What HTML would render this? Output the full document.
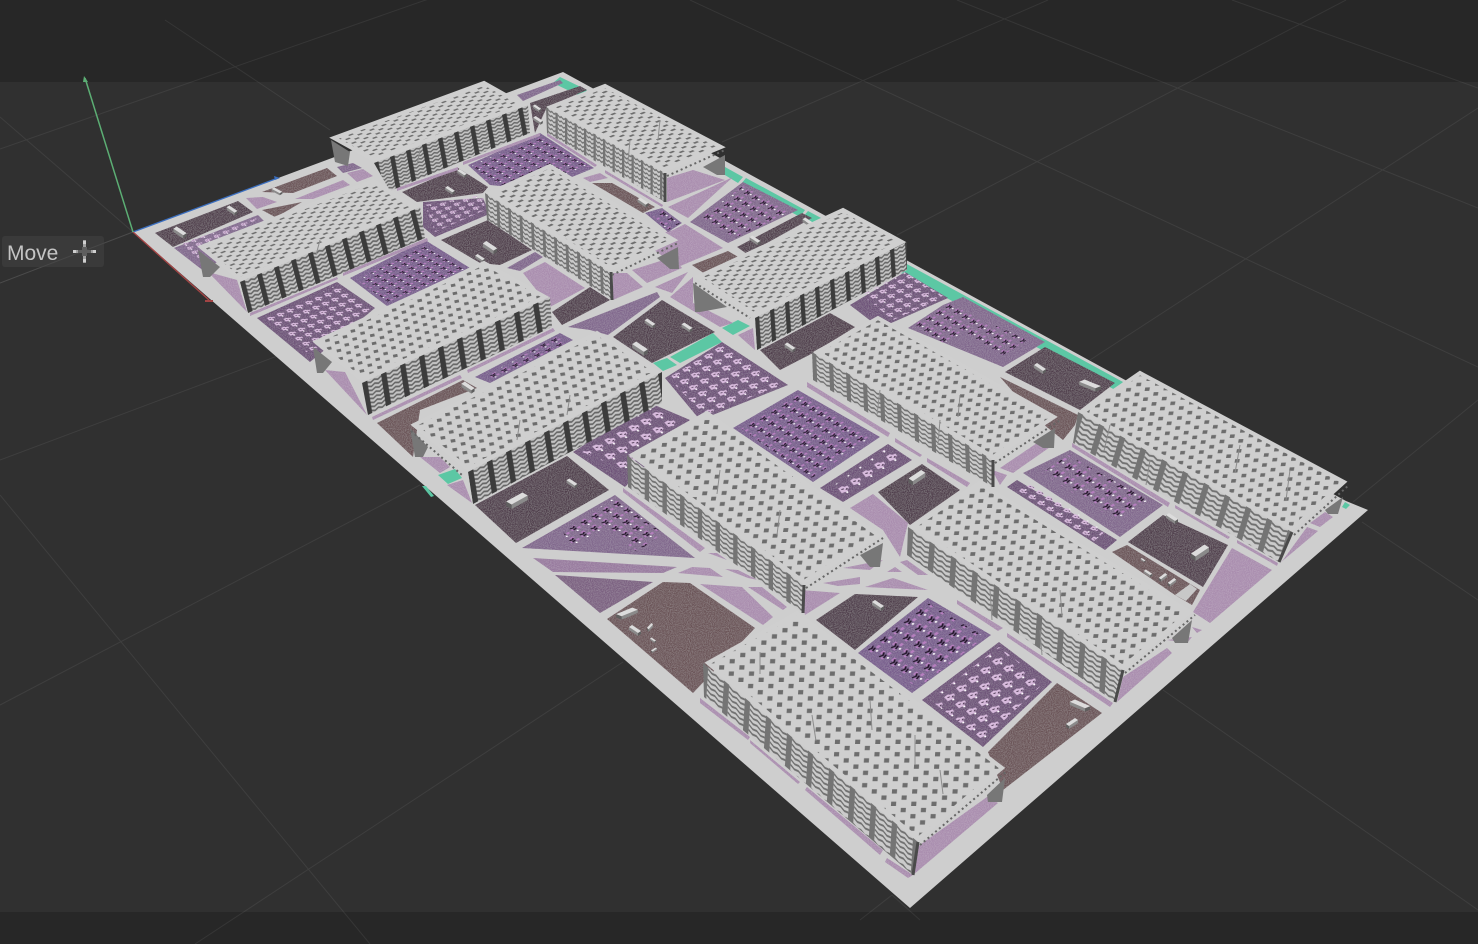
<!DOCTYPE html>
<html lang="en"><head><meta charset="utf-8"><title>Move</title>
<style>
html,body{margin:0;padding:0;background:#303030;width:1478px;height:944px;overflow:hidden}
svg{display:block;position:absolute;left:0;top:0}
.d{fill:#4f3c4b}.b{fill:#6a5256}.m{fill:#80668c}.l{fill:#a98cae}.p{fill:#775c8c}.q{fill:#6c5077}.t{fill:#5cc7a4}
.st{fill:#a98cae}
.r{stroke:#cfcfcf;stroke-width:4;stroke-linejoin:miter}
.s{fill:#777}
.f{fill:none;stroke:#666;stroke-width:2;stroke-dasharray:2 3}
.e{fill:none;stroke:#4a4a4a;stroke-width:3}
.g{stroke:#fff;stroke-opacity:.07;stroke-width:1;fill:none}
.c{stroke:#8c8c8c;stroke-width:1;fill:none}
</style></head><body>
<svg width="1478" height="944" viewBox="0 0 1478 944" xmlns="http://www.w3.org/2000/svg">
<defs>
<filter id="n" filterUnits="userSpaceOnUse" x="0" y="0" width="1478" height="944">
<feTurbulence type="fractalNoise" baseFrequency=".95" numOctaves="2" seed="4" result="t"/>
<feColorMatrix in="t" type="matrix" values="0 0 0 0 1  0 0 0 0 1  0 0 0 0 1  .3 0 0 0 -.1" result="w"/>
<feComposite in="w" in2="SourceAlpha" operator="in" result="c"/>
<feMerge><feMergeNode in="SourceGraphic"/><feMergeNode in="c"/></feMerge>
</filter>
<pattern id="rb" width="2" height="2" patternUnits="userSpaceOnUse"><rect width="2" height="2" fill="#cfcfcf"/><rect width=".72" height=".5" fill="#6d6d6d"/><rect x="1" y="1" width=".72" height=".5" fill="#6d6d6d"/></pattern>
<pattern id="rn" width="2" height="2" patternUnits="userSpaceOnUse"><rect width="2" height="2" fill="#cfcfcf"/><rect width=".5" height=".7" fill="#6d6d6d"/><rect x="1" y="1" width=".5" height=".7" fill="#6d6d6d"/></pattern>
<pattern id="r1" href="#rb" patternTransform="matrix(6 -2.3 3 1.9 0 0)"/>
<pattern id="r3" href="#rb" patternTransform="matrix(6.2 -2.5 3.1 2 0 0)"/>
<pattern id="r7" href="#rb" patternTransform="matrix(6.2 -2.4 3.4 2.2 0 0)"/>
<pattern id="r2" href="#rb" patternTransform="matrix(6 -2.4 3.8 2.1 0 0)"/>
<pattern id="r4" href="#rb" patternTransform="matrix(6.2 -2.7 4 2.4 0 0)"/>
<pattern id="r5" href="#rn" patternTransform="matrix(8.8 -1.8 .9 4 0 0)"/>
<pattern id="r6" href="#rn" patternTransform="matrix(9.2 -1.4 .9 4.4 0 0)"/>
<pattern id="r8" href="#rn" patternTransform="matrix(9 -.3 .9 -4.6 0 0)"/>
<pattern id="r9" href="#rn" patternTransform="matrix(9.4 -.3 .9 -5 0 0)"/>
<pattern id="r10" href="#rn" patternTransform="matrix(9.7 -.2 .8 -5.3 0 0)"/>
<pattern id="r11" href="#rn" patternTransform="matrix(9.7 -.2 .9 -5.5 0 0)"/>
<pattern id="r13" href="#rn" patternTransform="matrix(10.1 0 .45 -6.2 0 0)"/>

<pattern id="w1" width="20" height="20" patternUnits="userSpaceOnUse"><rect width="20" height="20" fill="#c4c4c4"/><path fill="none" stroke="#666" stroke-width="1.1" d="M5 1l3.75 1 3.75-1 3.75 1 3.75-1M5 3.5l3.75 1 3.75-1 3.75 1 3.75-1M5 6l3.75 1 3.75-1 3.75 1 3.75-1M5 8.5l3.75 1 3.75-1 3.75 1 3.75-1M5 11l3.75 1 3.75-1 3.75 1 3.75-1M5 13.5l3.75 1 3.75-1 3.75 1 3.75-1M5 16l3.75 1 3.75-1 3.75 1 3.75-1M5 18.5l3.75 1 3.75-1 3.75 1 3.75-1"/><rect width="5.5" height="20" fill="#3c3c3c"/></pattern>
<pattern id="a1" href="#w1" patternTransform="matrix(.8 -.3 .25 1.35 374 163)"/>
<pattern id="a3" href="#w1" patternTransform="matrix(.85 -.355 .4 1.55 240 282)"/>
<pattern id="a5" href="#w1" patternTransform="matrix(.95 -.435 .25 1.6 362 383)"/>
<pattern id="a6" href="#w1" patternTransform="matrix(.95 -.49 .25 1.6 468 472)"/>
<pattern id="a7" href="#w1" patternTransform="matrix(.75 -.375 .1 1.55 755 318)"/>

<pattern id="w2" width="20" height="20" patternUnits="userSpaceOnUse"><rect width="20" height="20" fill="#cbcbcb"/><path fill="none" stroke="#707070" stroke-width="1.2" d="M5 1l3.750 1 3.750-1 3.750 1 3.750-1M5 4.200l3.750 1 3.750-1 3.750 1 3.750-1M5 7.400l3.750 1 3.750-1 3.750 1 3.750-1M5 10.600l3.750 1 3.750-1 3.750 1 3.750-1M5 13.800l3.750 1 3.750-1 3.750 1 3.750-1M5 17l3.750 1 3.750-1 3.750 1 3.750-1"/><rect width="5" height="20" fill="#747474"/></pattern>
<pattern id="a2" href="#w2" patternTransform="matrix(.475 .265 0 1.35 546 107)"/>
<pattern id="a4" href="#w2" patternTransform="matrix(.575 .365 .05 1.4 485 193)"/>
<pattern id="a8" href="#w2" patternTransform="matrix(.85 .51 .05 1.4 812 352)"/>
<pattern id="a9" href="#w2" patternTransform="matrix(1.05 .59 -.45 1.5 1078 412)"/>
<pattern id="a10" href="#w2" patternTransform="matrix(1.075 .715 -.1 1.55 908 527)"/>
<pattern id="a11" href="#w2" patternTransform="matrix(.885 .65 0 1.5 627 455)"/>
<pattern id="a13" href="#w2" patternTransform="matrix(1.05 .875 -.1 1.6 703 663)"/>

<pattern id="td" width="10" height="10" patternUnits="userSpaceOnUse"><path fill="#b67fbf" d="M4 1h3v2H4zM6 5h2.500v2H6zM1 4.500h1.500v2H1z"/><path d="M1.500 3l2.500 1 2-1.500M2.500 6l3-.8" stroke="#24152a" stroke-width="1.100" fill="none"/><rect x="3.500" y="7.400" width="1.400" height="1.400" fill="#fff"/></pattern>
<pattern id="tp" width="10" height="10" patternUnits="userSpaceOnUse"><path fill="#d8bbdd" d="M2 1.500h3l1 1.500 2 .5-.5 2-2 .5-.5 1.500-2-1-2-.5.5-2z"/><path d="M3 3.500l1.500.5M5 5.500l1.500-.5" stroke="#3a2740" stroke-width=".7" fill="none"/><rect x="3.500" y="7" width="1.200" height="1.200" fill="#fff"/></pattern>
<pattern id="t1" href="#td" patternTransform="matrix(.9 -.4 .7 .4 0 0)"/>
<pattern id="t2" href="#td" patternTransform="matrix(1 -.6 .8 .5 0 0)"/>
<pattern id="t3" href="#td" patternTransform="matrix(1.1 -.65 .8 .5 0 0)"/>
<pattern id="t4" href="#td" patternTransform="matrix(1.2 -.7 1 .65 0 0)"/>
<pattern id="t5" href="#td" patternTransform="matrix(1.1 -.5 .5 .5 0 0)"/>
<pattern id="t6" href="#td" patternTransform="matrix(1.1 -.6 1 .6 0 0)"/>
<pattern id="t7" href="#td" patternTransform="matrix(1.2 -.9 1.1 .7 0 0)"/>
<pattern id="p1" href="#tp" patternTransform="matrix(.95 -.4 .7 .5 0 0)"/>
<pattern id="p2" href="#tp" patternTransform="matrix(.9 -.4 .5 .4 0 0)"/>
<pattern id="p3" href="#tp" patternTransform="matrix(.9 -.5 .8 .45 0 0)"/>
<pattern id="p4" href="#tp" patternTransform="matrix(1.1 -.65 .9 .6 0 0)"/>
<pattern id="p5" href="#tp" patternTransform="matrix(1.2 -.65 1.2 .85 0 0)"/>
<pattern id="p6" href="#tp" patternTransform="matrix(1.2 -.8 1.1 .85 0 0)"/>
<pattern id="p7" href="#tp" patternTransform="matrix(.9 .6 .8 -.45 0 0)"/>
<pattern id="p8" href="#tp" patternTransform="matrix(1.2 -.9 1.1 .7 0 0)"/>
<g id="bx"><path fill="#8a8a8a" d="M-6-3 3 3v3L-6 0z"/><path fill="#5f5f5f" d="M3 3 6 1v3L3 6z"/><path fill="#dcdcdc" d="M-6-3-3-5 6 1 3 3z"/></g>
</defs>

<rect width="1478" height="944" fill="#303030"/>
<rect width="1478" height="82" fill="#272727"/>
<rect y="912" width="1478" height="32" fill="#272727"/>

<g class="g">
<path d="M0 283 133 232M0 149 480-19M0 117 133 232M165 20 330 130M690 0 1478 367M957 0 1478 208M1232 0 1478 88M722 142 1048 0M897 235 1346 0M1090 360 1478 108M1353 502 1478 400M1362 522 1478 600M1163 690 1478 910M0 705 420 485M0 495 370 944M195 944 623 662M0 460 320 340M860 920 892 895 920 920"/>
</g>

<polygon fill="#cecece" points="133,232 563,72 1346,501 1368,510 910,908"/>
<path d="M133 232 278 178" stroke="#3b6fc0" stroke-width="1.4" fill="none"/>
<path d="M133 232 209 300" stroke="#a24444" stroke-width="1.4" fill="none"/>
<path d="M274 176 280 178 275 180z" fill="#3b6fc0"/>
<path d="M205 300h8v2h-8z" fill="#a24444"/>
<path d="M133 232 85 78" stroke="#5cae74" stroke-width="1.500" fill="none"/>
<path d="M83 82 84 76 88 82z" fill="#5cae74"/>

<polygon class="t" points="560,77 587,90 582,97 553,83"/>
<polygon class="t" points="725,167 743,177 738,183 720,172"/>
<polygon class="t" points="746,178 805,210 800,217 741,184"/>
<polygon class="t" points="808,211 823,219 817,226 802,218"/>
<polygon class="t" points="905,263 1123,382 1117,391 899,272"/>
<polygon class="t" points="1342,507 1345,502 1350,505 1346,509"/>
<polygon class="t" points="722,328 738,320 750,326 733,335"/>
<polygon class="t" points="670,357 713,333 722,342 680,363"/>
<polygon class="t" points="653,363 667,358 677,365 663,371"/>
<polygon class="t" points="438,475 455,469 462,478 448,484"/>
<polygon class="t" points="422,486 426,486 434,496 431,497"/>

<g filter="url(#n)">
<polygon class="d" points="155,233 238,201 253,212 173,247"/>
<polygon class="m" points="174,248 258,215 265,222 205,272"/>
<polygon class="b" points="262,192 327,168 337,176 293,193"/>
<polygon class="l" points="295,199 343,180 350,185 313,199"/>
<polygon class="l" points="246,198 263,197 277,202 257,209"/>
<polygon class="b" points="262,210 302,202 285,212 275,217"/>
<polygon class="m" points="337,167 353,163 362,168 343,173"/>
<polygon class="l" points="347,173 363,169 373,176 357,182"/>
<polygon class="d" points="402,192 458,168 488,187 483,193 417,202"/>
<polygon class="q" points="423,202 483,198 488,210 487,215 435,237 423,227"/>
<polygon class="d" points="441,240 488,220 532,250 500,265 480,263"/>
<polygon class="m" points="507,268 535,252 543,257 520,271"/>
<polygon class="p" points="350,278 425,240 470,268 387,306"/>
<polygon class="q" points="257,318 337,282 375,308 310,362"/>
<polygon class="l" points="208,272 237,280 247,312"/>
<polygon class="p" points="468,165 540,133 594,168 540,190 490,185"/>
<polygon class="m" points="517,95 560,80 563,83 523,101"/>
<polygon class="d" points="530,103 580,86 587,90 547,107 535,133"/>
<polygon class="b" points="592,183 612,183 655,207 643,213"/>
<polygon class="l" points="583,178 600,173 608,178 590,182"/>
<polygon class="l" points="667,178 693,170 725,180 667,202"/>
<polygon class="l" points="668,207 733,177 688,218"/>
<polygon class="m" points="690,222 743,182 798,210 728,243"/>
<polygon class="l" points="640,240 673,230 685,224 723,248 678,267"/>
<polygon class="p" points="645,213 662,208 682,223 668,232"/>
<polygon class="d" points="737,247 802,213 812,218 747,254"/>
<polygon class="b" points="692,265 728,251 740,258 705,274"/>
<polygon class="l" points="613,273 627,273 643,287 613,300"/>
<polygon class="l" points="632,270 673,257 682,268 647,283"/>
<polygon class="l" points="655,287 688,272 672,293"/>
<polygon class="l" points="670,297 693,277 693,303 733,323 720,327"/>
<polygon class="m" points="568,327 657,292 660,297 608,335 590,330"/>
<polygon class="d" points="552,312 590,287 610,300 562,325"/>
<polygon class="d" points="613,337 662,300 715,332 652,363"/>
<polygon class="l" points="523,273 545,262 585,288 550,307"/>
<polygon class="l" points="738,335 753,328 755,350"/>
<polygon class="q" points="665,378 722,342 788,385 700,420"/>
<polygon class="d" points="760,350 830,313 855,327 813,353 780,370"/>
<polygon class="q" points="850,305 905,272 948,298 880,328"/>
<polygon class="m" points="908,328 943,305 963,297 1045,342 1003,367"/>
<polygon class="d" points="1005,372 1045,347 1115,383 1080,410"/>
<polygon class="b" points="1000,377 1078,415 1075,425 1063,440 1038,420"/>
<polygon class="p" points="733,428 798,390 880,437 813,482"/>
<polygon class="q" points="820,488 888,444 912,460 843,502"/>
<polygon class="d" points="878,492 922,464 960,490 910,525"/>
<polygon class="l" points="850,508 873,494 908,523 900,557 883,530"/>
<polygon class="l" points="1000,468 1037,443 1053,445 1013,473"/>
<polygon class="l" points="992,470 1007,475 1000,485"/>
<polygon class="m" points="1023,473 1070,450 1163,505 1120,537"/>
<polygon class="q" points="1007,487 1017,480 1117,540 1105,550"/>
<polygon class="d" points="1128,542 1163,515 1228,545 1203,587"/>
<polygon class="b" points="1112,552 1127,545 1200,590 1192,605 1175,595"/>
<polygon class="l" points="1232,548 1272,570 1210,623 1193,612"/>
<polygon class="l" points="1310,523 1325,512 1333,517 1320,527"/>
<polygon class="l" points="1283,560 1307,527 1318,531 1280,563"/>
<polygon class="l" points="1192,627 1202,630 1197,633"/>
<polygon class="d" points="475,505 567,456 609,490 516,543"/>
<polygon class="q" points="573,452 650,403 690,420 625,487"/>
<polygon class="m" points="522,548 615,495 695,558"/>
<polygon class="l" points="533,558 677,567 663,573 553,572" style="fill:#97799e"/>
<polygon class="q" points="555,575 653,582 600,613" style="fill:#7a5f80"/>
<polygon class="b" points="607,619 663,582 690,583 755,628 693,693"/>
<polygon class="l" points="678,573 692,567 710,568 723,577"/>
<polygon class="l" points="700,584 742,587 773,617 763,625"/>
<polygon class="l" points="725,569 738,570 758,580 748,578"/>
<polygon class="l" points="748,587 762,587 787,607 783,610"/>
<polygon class="l" points="805,615 800,590 840,593"/>
<polygon class="l" points="708,553 717,553 727,560"/>
<polygon class="l" points="823,583 860,577 860,584 838,586"/>
<polygon class="d" points="816,620 855,594 918,597 855,650"/>
<polygon class="l" points="865,587 893,578 928,590"/>
<polygon class="l" points="843,568 883,560 870,570"/>
<polygon class="l" points="887,572 895,567 902,572"/>
<polygon class="l" points="900,562 907,560 928,575 918,575"/>
<polygon class="p" points="858,653 928,598 991,635 912,693"/>
<polygon class="q" points="922,700 999,642 1052,682 983,747"/>
<polygon class="b" points="988,752 1057,683 1102,713 1003,790"/>
<polygon class="l" points="917,847 987,797 998,803 913,875"/>
<polygon class="b" points="377,423 463,380 477,388 420,410 413,457"/>
<polygon class="l" points="420,457 440,457 450,467 440,473"/>
<polygon class="l" points="447,485 463,480 472,503"/>
<polygon class="l" points="325,370 345,372 367,415"/>
<polygon class="p" points="475,377 560,333 573,340 490,383"/>
<polygon class="l" points="1117,702 1172,653 1167,648 1123,677"/>
<polygon class="l" points="1167,640 1192,637 1187,643"/>
<g class="st">
<polygon points="700,698 750,737 748,740 700,703"/>
<polygon points="750,740 800,782 798,784 750,743"/>
<polygon points="807,787 883,850 880,855 805,790"/>
<polygon points="887,858 913,875 908,878 885,862"/>
<polygon points="957,600 1003,628 998,631 957,604"/>
<polygon points="1007,633 1113,703 1110,707 1007,637"/>
<polygon points="1072,443 1170,503 1168,507 1072,447"/>
<polygon points="1175,505 1230,537 1228,539 1175,508"/>
<polygon points="1237,540 1278,563 1277,566 1237,543"/>
<polygon points="807,382 890,433 888,437 807,387"/>
<polygon points="895,438 922,455 920,457 895,442"/>
<polygon points="927,458 970,483 967,487 927,462"/>
<polygon points="623,488 705,548 700,552 623,492"/>
<polygon points="250,313 337,277 338,279 250,316"/>
<polygon points="343,273 427,238 428,241 343,276"/>
<polygon points="397,188 458,167 458,170 397,191"/>
<polygon points="463,162 540,133 540,136 463,165"/>
<polygon points="547,133 597,165 595,167 547,136"/>
<polygon points="605,170 663,205 662,207 605,173"/>
<polygon points="372,417 460,375 462,378 373,420"/>
<polygon points="467,370 553,328 555,331 468,373"/>
</g>
</g>

<polygon fill="url(#t1)" points="357,280 423,246 466,270 388,302"/>
<polygon fill="url(#t1)" points="472,165 540,137 590,166 520,190 485,180"/>
<polygon fill="url(#t2)" points="650,214 662,210 680,224 668,230"/>
<polygon fill="url(#t2)" points="700,218 743,186 790,212 735,238"/>
<polygon fill="url(#t2)" points="913,323 947,303 1027,340 1003,355 967,333 943,343"/>
<polygon fill="url(#t3)" points="740,428 798,393 872,437 812,478"/>
<polygon fill="url(#t4)" points="1042,473 1068,455 1148,500 1118,522"/>
<polygon fill="url(#t5)" points="487,375 560,335 568,342 492,380"/>
<polygon fill="url(#t6)" points="563,533 613,498 663,533 637,552 607,527 573,545"/>
<polygon fill="url(#t7)" points="865,652 928,603 985,637 918,688"/>
<polygon fill="url(#p1)" points="265,318 337,285 372,308 310,355"/>
<polygon fill="url(#p2)" points="425,205 483,195 485,210 435,232"/>
<polygon fill="url(#p2)" points="183,243 260,217 197,260"/>
<polygon fill="url(#p3)" points="862,295 905,272 945,297 893,320"/>
<polygon fill="url(#p4)" points="668,378 722,345 782,385 705,415"/>
<polygon fill="url(#p5)" points="582,452 650,408 680,420 625,470"/>
<polygon fill="url(#p6)" points="830,488 888,447 905,460 845,497"/>
<polygon fill="url(#p7)" points="1017,490 1030,485 1107,530 1093,542"/>
<polygon fill="url(#p8)" points="930,700 999,647 1045,682 983,740"/>

<use href="#bx" transform="translate(232 210) scale(.9)"/>
<use href="#bx" transform="translate(180 232) scale(1.1)"/>
<use href="#bx" transform="translate(277 191) scale(.9 .7)"/>
<use href="#bx" transform="translate(462 173) scale(.8)"/>
<use href="#bx" transform="translate(450 190) scale(.8)"/>
<use href="#bx" transform="translate(490 247) scale(1.2)"/>
<use href="#bx" transform="translate(480 258) scale(.8)"/>
<use href="#bx" transform="translate(537 108) scale(.7)"/>
<use href="#bx" transform="translate(538 120) scale(.8)"/>
<use href="#bx" transform="translate(643 202) scale(.9)"/>
<use href="#bx" transform="translate(755 240) scale(.9)"/>
<use href="#bx" transform="translate(808 222) scale(.9)"/>
<use href="#bx" transform="translate(650 323) scale(.9)"/>
<use href="#bx" transform="translate(687 327) scale(.9)"/>
<use href="#bx" transform="translate(640 348) scale(1.3)"/>
<use href="#bx" transform="translate(790 347) scale(.9)"/>
<use href="#bx" transform="translate(517 500) scale(-1.8 1.5)"/>
<use href="#bx" transform="translate(572 483) scale(.9)"/>
<use href="#bx" transform="translate(468 387) scale(1.1)"/>
<use href="#bx" transform="translate(1040 368) scale(1)"/>
<use href="#bx" transform="translate(1090 385) scale(1.8 1.1)"/>
<use href="#bx" transform="translate(917 477) scale(-1.4 1.4)"/>
<use href="#bx" transform="translate(1172 518) scale(1)"/>
<use href="#bx" transform="translate(1200 552) scale(-1.5 1.5)"/>
<use href="#bx" transform="translate(878 605) scale(1)"/>
<use href="#bx" transform="translate(1080 705) scale(1.7 1.1)"/>
<use href="#bx" transform="translate(1072 723) scale(-1 1)"/>
<use href="#bx" transform="translate(627 613) scale(-1.8 1.1)"/>
<use href="#bx" transform="translate(635 630) scale(1)"/>
<use href="#bx" transform="translate(650 627) scale(-.5 .8)"/>
<use href="#bx" transform="translate(653 640) scale(.5)"/>
<use href="#bx" transform="translate(654 650) scale(-.5 .5)"/>
<use href="#bx" transform="translate(1143 560) scale(.4)"/>
<use href="#bx" transform="translate(1148 573) scale(.7)"/>
<use href="#bx" transform="translate(1163 577) scale(-.7 .8)"/>
<use href="#bx" transform="translate(1172 582) scale(-.7 .8)"/>
<polygon fill="#c8c8c8" points="1175,595 1190,584 1197,589 1186,601"/>

<!-- B1 --><polygon class="s" points="331,140 350,152 348,166 335,162"/>
<polygon fill="url(#a1)" points="374,163 528,105 530,133 390,191"/>
<polygon fill="url(#r1)" class="r" points="334,138 484,83 523,105 374,160"/>
<!-- B2 --><polygon class="s" points="703,167 725,155 725,175 717,175"/>
<polygon fill="url(#a2)" points="546,107 665,173 665,202 547,133"/><path class="e" d="M665 173V202"/>
<polygon fill="url(#r2)" class="r" points="551,107 605,86 721,147 665,170"/><path class="f" d="M667 176 725 150"/>
<!-- B3 --><polygon class="s" points="198,250 220,267 210,277 203,277"/>
<polygon fill="url(#a3)" points="240,282 420,207 425,238 248,313"/>
<polygon fill="url(#r3)" class="r" points="201,247 373,181 415,207 240,279"/>
<!-- B4 --><polygon class="s" points="657,258 678,247 679,269 670,269"/>
<polygon fill="url(#a4)" points="485,193 610,272 612,300 487,220"/><path class="e" d="M611 272 612 300"/>
<polygon fill="url(#r4)" class="r" points="490,193 550,166 674,240 610,269"/><path class="f" d="M612 275 678 243"/>
<!-- B7 --><polygon class="s" points="693,283 727,307 700,312 695,312"/>
<polygon fill="url(#a7)" points="755,318 907,242 907,270 757,350"/>
<polygon fill="url(#r7)" class="r" points="698,277 843,210 902,242 755,315"/><path class="f" d="M695 283 750 318"/>
<!-- B5 --><polygon class="s" points="313,347 332,362 323,373 317,373"/>
<polygon fill="url(#a5)" points="362,383 550,297 552,327 368,415"/>
<polygon fill="url(#r5)" class="r" points="316,342 484,263 545,297 362,380"/>
<!-- B8 --><polygon class="s" points="1033,442 1055,428 1054,448 1043,448"/>
<polygon fill="url(#a8)" points="812,352 993,460 993,487 813,380"/><path class="e" d="M993 460V487"/>
<polygon fill="url(#r8)" class="r" points="817,352 878,318 1054,417 993,457"/><path class="f" d="M995 463 1059 421"/>
<!-- B6 --><polygon class="s" points="410,428 428,447 423,457 415,457"/>
<polygon fill="url(#a6)" points="468,472 662,372 662,403 473,504"/>
<polygon fill="url(#r6)" class="r" points="414,425 597,333 657,372 468,469"/><path class="f" d="M411 431 462 475"/>
<!-- B9 --><polygon class="s" points="1325,510 1343,497 1338,514 1328,514"/>
<polygon fill="url(#a9)" points="1078,412 1292,532 1279,562 1073,443"/><path class="e" d="M1292 532 1279 562"/>
<polygon fill="url(#r9)" class="r" points="1083,412 1140,373 1344,482 1292,529"/><path class="f" d="M1294 535 1349 485"/>
<!-- B11 --><polygon class="s" points="860,555 883,543 880,567 870,567"/>
<polygon fill="url(#a11)" points="627,455 804,585 803,613 628,487"/><path class="e" d="M804 585 803 613"/>
<polygon fill="url(#r11)" class="r" points="632,455 707,413 878,535 804,582"/><path class="f" d="M806 588 883 538"/>
<!-- B10 --><polygon class="s" points="1172,638 1192,620 1188,643 1175,643"/>
<polygon fill="url(#a10)" points="908,527 1123,670 1115,702 907,555"/><path class="e" d="M1123 670 1115 702"/>
<polygon fill="url(#r10)" class="r" points="913,527 979,483 1190,612 1123,667"/><path class="f" d="M1125 673 1195 615"/>
<!-- B13 --><polygon class="s" points="987,795 1005,778 1002,802 988,802"/>
<polygon fill="url(#a13)" points="703,663 918,842 913,875 704,697"/><path class="e" d="M918 842 913 875"/>
<polygon fill="url(#r13)" class="r" points="708,663 797,613 1002,768 918,839"/><path class="f" d="M920 845 1007 771"/>

<g class="c">
<path d="M760 652v22M812 715l4 26M870 700l2 30M915 735v30M940 770l3 24M1110 425l-6 26M1240 445l-5 28M1290 470l-4 30M1150 460l-4 25M990 590l2 30M1060 590l2 26M1040 630l2 25M720 470l-3 24M780 510l-3 25M880 390l-3 25M940 420l-2 25M960 395l-2 22M520 420l-3 20M570 395l-3 20M630 140l-2 22M660 120l-2 20M420 150l-3 15M320 240l-4 15"/>
</g>

<rect x="2" y="236" width="102" height="31" rx="3" fill="#3a3a3a"/>
<path d="M0 283 133 232" class="g"/>
<text x="7" y="260" font-family="'Liberation Sans',sans-serif" font-size="21" fill="#c4c4c4">Move</text>
<g fill="#a0a0a0"><rect x="83" y="240" width="3" height="23"/><rect x="73" y="250" width="23" height="3"/></g>
<g fill="#5e5e5e"><rect x="82" y="247" width="5" height="9"/><rect x="78" y="250" width="13" height="3"/></g>
<g fill="#cfcfcf"><rect x="83" y="241" width="3" height="3"/><rect x="83" y="259" width="3" height="3"/><rect x="73" y="250" width="3" height="3"/><rect x="93" y="250" width="3" height="3"/></g>
</svg>
</body></html>
